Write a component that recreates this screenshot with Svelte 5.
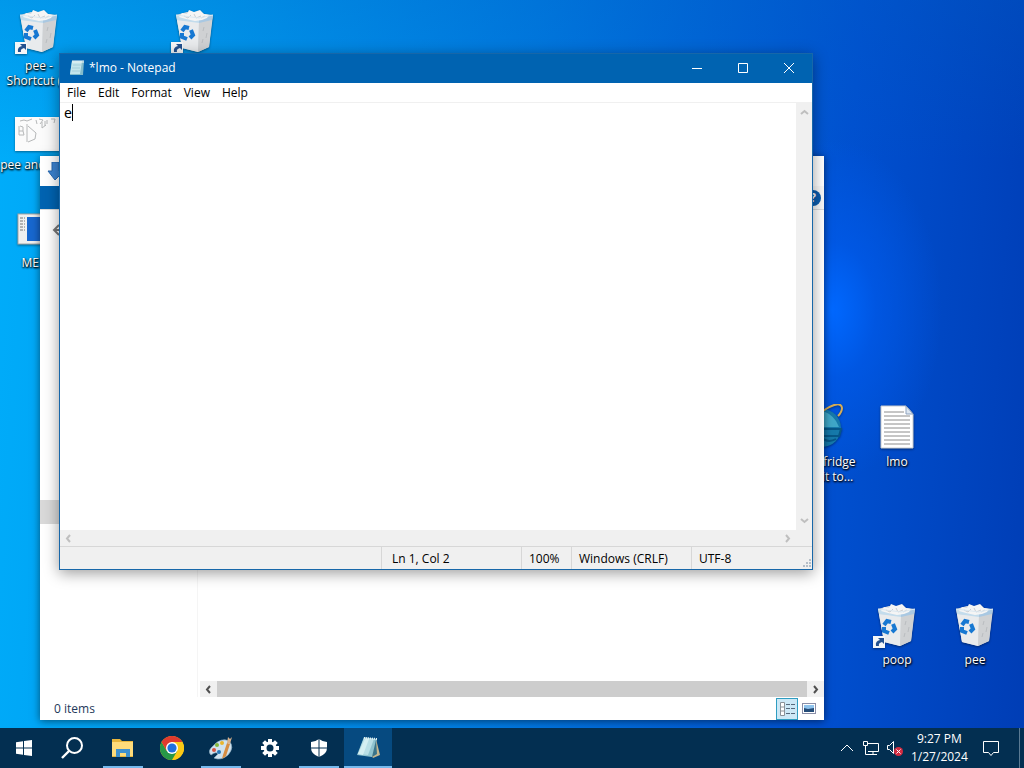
<script lang="ts">
	interface DesktopIcon {
		label: string;
		kind: string;
		x: number;
		y: number;
		shortcut?: boolean;
	}

	const icons: DesktopIcon[] = [
		{ label: "pee -\nShortcut (2)", kind: "bin", x: 0, y: 8, shortcut: true },
		{ label: "pee", kind: "bin", x: 156, y: 8, shortcut: true },
		{ label: "pee and poop", kind: "drawing", x: 0, y: 107 },
		{ label: "MEMZ", kind: "program", x: 0, y: 205 },
		{ label: "poop's fridge\nI want it to...", kind: "browser", x: 780, y: 404 },
		{ label: "lmo", kind: "text", x: 858, y: 404 },
		{ label: "poop", kind: "bin", x: 858, y: 602, shortcut: true },
		{ label: "pee", kind: "bin", x: 936, y: 602 },
	];

	const apps = [
		{ name: "File Explorer", icon: "explorer", open: true },
		{ name: "Google Chrome", icon: "chrome", open: false },
		{ name: "Paint", icon: "paint", open: true },
		{ name: "Settings", icon: "settings", open: false },
		{ name: "Windows Security", icon: "shield", open: true },
		{ name: "Notepad", icon: "notepad", open: true, active: true },
	];

	const menus = ["File", "Edit", "Format", "View", "Help"];
	const teeth = [0, 45, 90, 135, 180, 225, 270, 315];

	let text = $state("e");
</script>

{#snippet arrow(path: string)}
	<svg width="9" height="9" viewBox="0 0 9 9"><path d={path} fill="none" stroke="currentColor" stroke-width="2" /></svg>
{/snippet}

{#snippet bin()}
	<path d="M5 7 L16 4 L42 7 L38 39 L27 44 L11 40 Z" fill="#d5dbe0" />
	<path d="M6 12 L28 14 L27 44 L11 40 Z" fill="#e9ebed" />
	<path d="M28 14 L41 11 L38 39 L27 44 Z" fill="#cfd1d3" />
	<path d="M5 7 L28 10 L28 15 L6 12z" fill="#c3dcec" />
	<path d="M28 10 L42 7 L41 12 L28 15z" fill="#a9c8e2" />
	<path d="M8 9 L11 5 L16 6 L18 2 L23 4 L29 2 L33 6 L38 7 L36 10 L31 12 L24 13 L15 11 Z" fill="#f5f5f5" />
	<path d="M13 8 l4 2 l3 -3 M23 6 l2 4 l5 -2 M30 10 l4 -2" fill="none" stroke="#cbced1" />
	<path d="M5 7 L28 10 L42 7" fill="none" stroke="#dbe8f1" stroke-width="1" />
	<path d="M33 19 l-1 4 M36 25 l-1 5 M32 31 l-1 4" stroke="#babdc0" />
	<g fill="none" stroke="#1778d2" stroke-width="4">
		<path d="M11 23 L14 19 L18 20" />
		<path d="M20 22 L22 27 L19 30" />
		<path d="M16 31 L11 29 L11 25" />
	</g>
{/snippet}

{#snippet picture(kind: string, shortcut: boolean)}
	<svg class="picture" width="48" height="48" viewBox="0 0 48 48">
		{#if kind === "bin"}
			{@render bin()}
		{:else if kind === "drawing"}
			<rect x="0" y="10" width="48" height="34" fill="#fbfbfb" />
			<path
				d="M5 14 l4 -1 l3 1 l5 -2 M21 13 l1 4 M24 12 l4 1 l-3 4 M30 14 l0 5 M32 13 l0 4 M36 12 l4 0 l-1 4 M4 19 l0 9 l5 0 l-1 -4 l-4 0 M5 19 l3 1 l0 4 M12 17 l0 18 M13 19 l8 7 l-1 6 l-7 3 M27 15 l0 6 l4 -3"
				fill="none"
				stroke="#b6b8b9"
			/>
		{:else if kind === "program"}
			<rect x="3" y="9" width="42" height="30" fill="#f0f0f0" stroke="#a6a6a6" />
			<rect x="12" y="12" width="31" height="24" fill="#1767cf" />
			<path d="M5 13h5M5 16h5M5 19h5M5 22h5M5 25h5" stroke="#777" stroke-dasharray="3 1" />
		{:else if kind === "browser"}
			<circle cx="27" cy="24" r="19" fill="#1679aa" />
			<path d="M17 13 q12 -12 24 4 l3 6 H20z" fill="#53bad3" opacity=".7" />
			<path d="M14 25 h32 l-2 7 H25 q7 8 16 3" fill="none" stroke="#075787" stroke-width="2" />
			<path d="M5 35 C18 8 46 -7 47 4 q0 4 -4 8" fill="none" stroke="#d7ad55" stroke-width="2" />
		{:else}
			<path d="M8 2h25l7 8v34H8z" fill="#fff" stroke="#c8ccd0" />
			<path d="M33 2v8h7z" fill="#dce6f1" stroke="#8fa3bf" />
			<path d="M11 8h20M11 12h26M11 16h26M11 20h26M11 24h26M11 28h26M11 32h26M11 36h26M11 40h26" stroke="#8c8c8c" />
		{/if}
		{#if shortcut}
			<rect x="0" y="34" width="12" height="12" fill="#f4f6f8" />
			<path d="M3 44 q-1 -5 4 -6 l-2 -2 h6 v6 l-2 -2 q-4 1 -3 4z" fill="#23518f" />
		{/if}
	</svg>
{/snippet}

{#snippet appIcon(icon: string)}
	<svg width="24" height="24" viewBox="0 0 24 24">
		{#if icon === "explorer"}
			<path d="M1 3h8l2 2h11v16H1z" fill="#e8b63d" />
			<path d="M1 6h21v14H1z" fill="#ffdc7b" />
			<path d="M5 21v-8h14v8h-4v-4H9v4z" fill="#3f91cf" />
		{:else if icon === "chrome"}
			<circle cx="12" cy="12" r="12" fill="#fbc916" />
			<path d="M12 12 V6 H22.4 A12 12 0 0 1 12 24z" fill="#fbc916" />
			<path d="M1.6 6 A12 12 0 0 0 12 24 L17.2 15 L12 12 6.8 15z" fill="#279847" />
			<path d="M12 6 H22.4 A12 12 0 0 0 1.6 6 L6.8 15z" fill="#df3a2e" />
			<circle cx="12" cy="12" r="6" fill="#fff" />
			<circle cx="12" cy="12" r="4.6" fill="#1f70de" />
		{:else if icon === "paint"}
			<path d="M4 10 Q12 1 20 5 Q26 11 19 19 Q12 25 5 22 L9 18 Q7 15 2 19 Q-2 15 4 10z" fill="#d1e2ee" stroke="#8dadc2" stroke-width=".7" />
			<circle cx="5" cy="14" r="2" fill="#d95442" />
			<circle cx="8" cy="9" r="2" fill="#83b83c" />
			<circle cx="13" cy="7" r="2" fill="#e9b52d" />
			<circle cx="10" cy="16" r="2" fill="#2878b7" />
			<path d="M18 7 L21 8 L17 20 L13 23 L14 19z" fill="#d88d42" />
			<path d="M18 7 L19 1 L21 3 L23 1 L21 8z" fill="#d9b18b" />
		{:else if icon === "settings"}
			<g fill="#fff">
				{#each teeth as angle}
					<rect x="10" y="3" width="4" height="4" transform="rotate({angle} 12 12)" />
				{/each}
			</g>
			<circle cx="12" cy="12" r="5" fill="none" stroke="#fff" stroke-width="3" />
		{:else if icon === "shield"}
			<path d="M12 3 Q16 6 20 6 V12 Q20 18 12 21 Q4 18 4 12 V6 Q8 6 12 3z" fill="#fff" />
			<path d="M12 3v18M4 12h16" stroke="#032f51" stroke-width="1" />
		{:else}
			<path d="M20 3 L24 19 L17 22 L15 19z" fill="#c5b78f" />
			<path d="M8 1 L21 3 L16 21 L1 19z" fill="#8fc3cf" />
			<path d="M8 2 L18 3 L12 19 L2 18z" fill="#b9dfe6" />
			<path d="M2 18 L9 3 L13 3 L7 19z" fill="#d5eff2" />
			<path d="M20 4 L21 18 L16 21z" fill="#39748b" />
			<path d="M8 2 L21 3" stroke="#e2eff3" stroke-width="2" stroke-dasharray="1 1" />
		{/if}
	</svg>
{/snippet}

<div class="desktop">
	<main>
		{#each icons as icon}
			<button class="shortcut" style="left:{icon.x}px; top:{icon.y}px">
				{@render picture(icon.kind, !!icon.shortcut)}
				<span>{icon.label}</span>
			</button>
		{/each}

		<section class="window explorer" aria-label="File Explorer">
			<div class="quick">
				<svg width="20" height="18" viewBox="0 0 20 18"><path d="M7 0h7v9h5l-9 9-7-9h4z" fill="#3c83d1" stroke="#2766ad" /></svg>
			</div>
			<div class="ribbon">
				<span class="file-tab"></span>
				<button class="help" aria-label="Help">?</button>
			</div>
			<div class="address">
				<svg width="14" height="12" viewBox="0 0 14 12"><path d="M7 1 L2 6 L7 11 M2 6 H14" fill="none" stroke="#777" stroke-width="2" /></svg>
			</div>
			<div class="explorer-body">
				<nav aria-label="Folders"><div class="selected-folder"></div></nav>
				<div class="files">
					<div class="scroll-x dark">
						{@render arrow("M6 1 L3 4.5 L6 8")}
						<div class="thumb"></div>
						{@render arrow("M3 1 L6 4.5 L3 8")}
					</div>
				</div>
			</div>
			<footer>
				<span class="count">0 items</span>
				<button class="view current" aria-label="Details">
					<svg width="18" height="16" viewBox="0 0 18 16">
						<path d="M2.5 1.5h4v13h-4zM2 6h4M2 10h4" fill="#fff" stroke="#8b9298" />
						<path d="M8 3.5h4M13 3.5h4M8 7.5h4M13 7.5h4M8 12.5h4M13 12.5h4" stroke="#56697c" />
					</svg>
				</button>
				<button class="view" aria-label="Large icons">
					<svg width="14" height="11" viewBox="0 0 14 11">
						<rect x=".5" y=".5" width="13" height="10" fill="#fff" stroke="#8a8fa8" />
						<rect x="2" y="2" width="10" height="7" fill="#8ec3ed" />
						<path d="M2 5l4 1 6-1v4H2z" fill="#244c78" />
					</svg>
				</button>
			</footer>
		</section>

		<section class="window notepad" aria-label="Notepad">
			<header>
				<svg width="16" height="17" viewBox="0 0 16 17">
					<path d="M3 2h12l-1 14H1z" fill="#83bccb" />
					<path d="M3 2h10l-2 13H1z" fill="#c3e5ec" />
					<path d="M4 1v3M6 1v3M8 1v3M10 1v3M12 1v3M14 1v3" stroke="#edf5f5" />
					<path d="M4 6h8M3 9h8M3 12h8" stroke="#a5cfda" />
				</svg>
				<h1>*lmo - Notepad</h1>
				<button aria-label="Minimize"><svg width="10" height="10" viewBox="0 0 10 10"><path d="M0 5.5h10" /></svg></button>
				<button aria-label="Maximize"><svg width="10" height="10" viewBox="0 0 10 10"><path d="M.5 .5h9v9h-9z" /></svg></button>
				<button aria-label="Close"><svg width="10" height="10" viewBox="0 0 10 10"><path d="M0 0l10 10M10 0L0 10" /></svg></button>
			</header>
			<div class="menu">
				{#each menus as menu}
					<button>{menu}</button>
				{/each}
			</div>
			<div class="editor">
				<div class="page">
					<textarea aria-label="Text editor" spellcheck="false" bind:value={text}></textarea>
					<i class="caret"></i>
				</div>
				<div class="scroll-y">
					{@render arrow("M1 6 L4.5 3 L8 6")}
					{@render arrow("M1 3 L4.5 6 L8 3")}
				</div>
			</div>
			<div class="scroll-x">
				{@render arrow("M6 1 L3 4.5 L6 8")}
				{@render arrow("M3 1 L6 4.5 L3 8")}
			</div>
			<footer>
				<span class="position">Ln 1, Col 2</span>
				<span class="zoom">100%</span>
				<span class="ending">Windows (CRLF)</span>
				<span class="encoding">UTF-8</span>
				<svg width="10" height="10" viewBox="0 0 10 10"><path d="M7 1h2M4 4h2M7 4h2M1 7h2M4 7h2M7 7h2" stroke="#b5bec8" stroke-width="2" /></svg>
			</footer>
		</section>
	</main>

	<div class="taskbar">
		<button class="task" aria-label="Start">
			<svg width="16" height="16" viewBox="0 0 16 16"><path d="M0 2.2 L7 1.2 V7.5 H0z M8 1 L16 0 V7.5 H8z M0 8.5 H7 V14.8 L0 13.8z M8 8.5 H16 V16 L8 15z" fill="#fff" /></svg>
		</button>
		<button class="task" aria-label="Search">
			<svg width="22" height="22" viewBox="0 0 22 22"><circle cx="13.5" cy="8.5" r="7.5" fill="none" stroke="#fff" stroke-width="2" /><path d="M8 14 L1 21" stroke="#fff" stroke-width="2.4" /></svg>
		</button>
		<div class="apps">
			{#each apps as app}
				<button class="task" class:open={app.open} class:active={app.active} aria-label={app.name}>
					{@render appIcon(app.icon)}
				</button>
			{/each}
		</div>
		<div class="tray">
			<button aria-label="Show hidden icons"><svg width="14" height="14" viewBox="0 0 14 14"><path d="M1 10l6-6 6 6" /></svg></button>
			<button aria-label="Network">
				<svg width="18" height="16" viewBox="0 0 18 16"><path d="M6 3.5h10.5v8H6M11 12v3M7 14.5h8M1.5 1.5h4v4h-4zM3.5 6v8.5h4" /></svg>
			</button>
			<button aria-label="Volume">
				<svg width="18" height="18" viewBox="0 0 18 18">
					<path d="M1.5 6.5h2l4-4v12l-4-4h-2z" />
					<circle cx="12.5" cy="12.5" r="4.5" fill="#d52b41" stroke="none" />
					<path d="M10.5 10.5l4 4M14.5 10.5l-4 4" />
				</svg>
			</button>
			<button class="clock"><span>9:27 PM</span><span>1/27/2024</span></button>
			<button class="notifications" aria-label="Notifications">
				<svg width="18" height="18" viewBox="0 0 18 18"><path d="M1.5 2.5h15v11h-5l-2.500 3-2.500-3h-5z" /></svg>
			</button>
			<button class="show-desktop" aria-label="Show desktop"></button>
		</div>
	</div>
</div>

<style>
	.desktop {
		display: flex;
		flex-direction: column;
		height: 100vh;
		overflow: hidden;
		font: 12px/15px "Open Sans", "Noto Sans", sans-serif;
		background:
			radial-gradient(ellipse 110px 170px at 832px 310px, #0068ff 0%, #005cf099 40%, transparent 100%),
			linear-gradient(180deg, #0060c044 0, transparent 160px),
			linear-gradient(94deg, #00adfa 0%, #009df0 20%, #007be2 50%, #0050d0 80%, #003db5 100%);
	}

	button {
		font: inherit;
		color: inherit;
		background: none;
		border: 0;
		padding: 0;
	}

	svg {
		display: block;
		flex: none;
	}

	main {
		position: relative;
		flex: 1;
		min-height: 0;
	}

	.shortcut {
		position: absolute;
		display: flex;
		flex-direction: column;
		align-items: center;
		gap: 2px;
		width: 78px;
		color: #fff;
		text-shadow: 1px 1px 2px #000, 0 1px 2px #000;
		white-space: pre;
	}

	.picture {
		filter: drop-shadow(0 1px 1px #0006);
	}

	.window {
		position: absolute;
		display: flex;
		flex-direction: column;
		box-sizing: border-box;
	}

	.explorer {
		left: 40px;
		top: 156px;
		width: 784px;
		height: 564px;
		background: #fff;
		box-shadow: 0 1px 8px #0008;
	}

	.quick {
		height: 30px;
		padding: 6px 5px;
		box-sizing: border-box;
	}

	.ribbon {
		display: flex;
		align-items: center;
		justify-content: space-between;
		height: 23px;
		padding-right: 3px;
		background: #f8f8f8;
		border-bottom: 1px solid #dadbdc;
	}

	.file-tab {
		align-self: stretch;
		width: 56px;
		background: #0063b1;
	}

	.help {
		width: 16px;
		height: 16px;
		border-radius: 50%;
		background: #0b5cad;
		color: #fff;
		font-weight: bold;
	}

	.address {
		padding: 14px 12px;
	}

	.explorer-body {
		display: flex;
		flex: 1;
	}

	nav {
		display: flex;
		flex-direction: column;
		justify-content: flex-end;
		width: 157px;
		padding-bottom: 173px;
		border-right: 1px solid #f5f5f5;
	}

	.selected-folder {
		height: 24px;
		background: #d9d9d9;
	}

	.files {
		display: flex;
		flex: 1;
		flex-direction: column;
		justify-content: flex-end;
		padding-left: 2px;
	}

	.scroll-x {
		display: flex;
		align-items: center;
		justify-content: space-between;
		height: 16px;
		padding: 0 20px 0 4px;
		background: #f0f0f0;
		color: #bfbfbf;
	}

	.scroll-x.dark {
		gap: 4px;
		padding: 0 4px;
		color: #505050;
	}

	.thumb {
		flex: 1;
		height: 16px;
		background: #cdcdcd;
	}

	.explorer footer {
		display: flex;
		align-items: center;
		height: 23px;
		padding: 0 4px 0 14px;
		color: #1e395b;
	}

	.count {
		flex: 1;
	}

	.view {
		display: grid;
		place-items: center;
		width: 22px;
		height: 22px;
		box-sizing: border-box;
	}

	.current {
		background: #cce8f6;
		border: 1px solid #2f9dc1;
	}

	.notepad {
		left: 59px;
		top: 53px;
		width: 754px;
		height: 517px;
		border: 1px solid #1767a9;
		background: #fff;
		box-shadow: 0 3px 14px #0006;
	}

	header {
		display: flex;
		align-items: center;
		height: 27px;
		padding: 0 0 2px 9px;
		background: #0063b1;
		color: #fff;
	}

	h1 {
		flex: 1;
		margin: 0 0 0 4px;
		font: inherit;
	}

	header button {
		display: grid;
		place-items: center;
		width: 46px;
		height: 27px;
	}

	header button path {
		fill: none;
		stroke: #fff;
	}

	.menu {
		display: flex;
		gap: 12px;
		height: 19px;
		padding: 0 7px;
		border-bottom: 1px solid #f0f0f0;
	}

	.editor {
		display: flex;
		flex: 1;
		min-height: 0;
	}

	.page {
		position: relative;
		display: flex;
		flex: 1;
	}

	textarea {
		flex: 1;
		padding: 1px 4px;
		border: 0;
		outline: 0;
		resize: none;
		color: #000;
		caret-color: transparent;
		font: 14px/18px "Noto Sans", sans-serif;
	}

	.caret {
		position: absolute;
		left: 12px;
		top: 1px;
		width: 1px;
		height: 17px;
		background: #000;
	}

	.scroll-y {
		display: flex;
		flex-direction: column;
		align-items: center;
		justify-content: space-between;
		width: 16px;
		padding: 5px 0;
		box-sizing: border-box;
		background: #f0f0f0;
		color: #bfbfbf;
	}

	.notepad footer {
		display: flex;
		align-items: stretch;
		height: 22px;
		border-top: 1px solid #d7d7d7;
		background: #f0f0f0;
		line-height: 23px;
	}

	.notepad footer span {
		box-sizing: border-box;
		padding-left: 7px;
		border-left: 1px solid #d7d7d7;
		white-space: nowrap;
	}

	.notepad footer .position {
		width: 140px;
		margin-left: auto;
		padding-left: 10px;
	}

	.zoom {
		width: 50px;
	}

	.ending {
		width: 120px;
	}

	.encoding {
		width: 111px;
	}

	.notepad footer svg {
		align-self: flex-end;
	}

	.taskbar {
		position: relative;
		display: flex;
		height: 40px;
		background: #032f51;
		color: #fff;
	}

	.task {
		display: grid;
		place-items: center;
		width: 48px;
		height: 40px;
	}

	.apps {
		display: flex;
		gap: 1px;
		margin-left: 3px;
	}

	.open {
		background: linear-gradient(#76b9ed, #76b9ed) center bottom / 40px 2px no-repeat;
	}

	.active {
		background: linear-gradient(#76b9ed, #76b9ed) center bottom / 48px 2px no-repeat #064a80;
	}

	.tray {
		display: flex;
		margin-left: auto;
	}

	.tray button {
		display: grid;
		place-items: center;
		width: 24px;
	}

	.tray path {
		fill: none;
		stroke: #fff;
	}

	.tray .clock {
		width: 56px;
		margin-left: 4px;
		align-content: center;
		line-height: 18px;
	}

	.tray .notifications {
		width: 48px;
	}

	.tray .show-desktop {
		width: 5px;
		margin-left: 4px;
		border-left: 1px solid #5a7a93;
	}
</style>
